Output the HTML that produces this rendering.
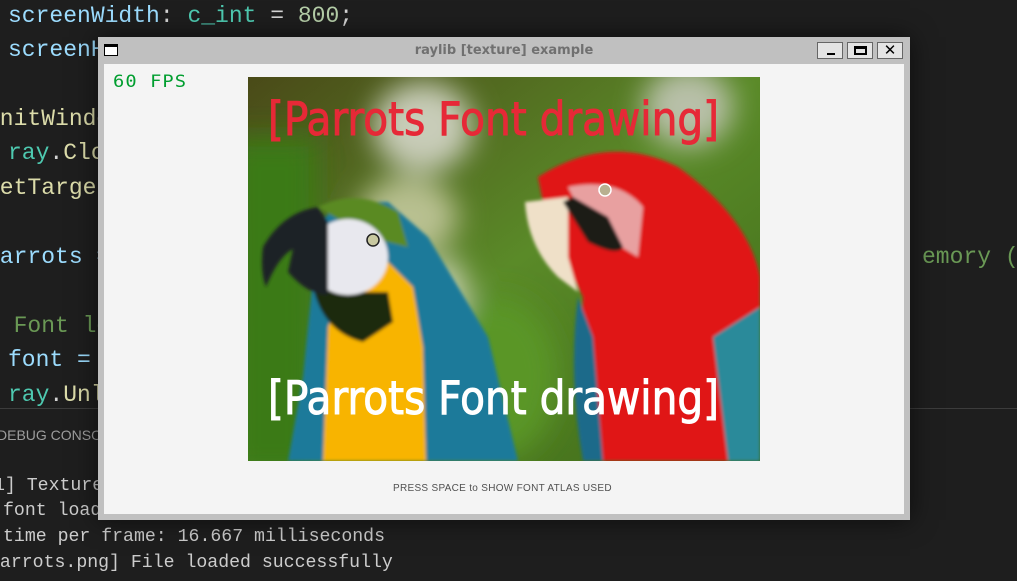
<!DOCTYPE html>
<html><head><style>
body{margin:0;width:1017px;height:581px;background:#1e1e1e;overflow:hidden;position:relative;font-family:"Liberation Mono",monospace}
.l{position:absolute;white-space:pre}
.b{color:#9cdcfe}.t{color:#4ec9b0}.n{color:#b5cea8}.y{color:#dcdcaa}.w{color:#d4d4d4}.g{color:#6a9955}
.term{position:absolute;font-size:18.2px;color:#cccccc;white-space:pre}
</style></head><body>
<div class="l" style="left:8px;top:0;font-size:23px;line-height:32px"><span class="b">screenWidth</span><span class="w">: </span><span class="t">c_int</span><span class="w"> = </span><span class="n">800</span><span class="w">;</span></div>
<div class="l b" style="left:8px;top:34px;font-size:23px;line-height:32px">screenHeight</div>
<div class="l y" style="left:-14px;top:103px;font-size:23px;line-height:32px">InitWindow</div>
<div class="l" style="left:8px;top:137px;font-size:23px;line-height:32px"><span class="t">ray</span><span class="w">.</span><span class="y">CloseWindow</span></div>
<div class="l y" style="left:-14px;top:172px;font-size:23px;line-height:32px">SetTargetFPS</div>
<div class="l b" style="left:-14px;top:241px;font-size:23px;line-height:32px">parrots =</div>
<div class="l g" style="left:922px;top:241px;font-size:23px;line-height:32px">emory (RA</div>
<div class="l g" style="left:-14px;top:310px;font-size:23px;line-height:32px">/ Font loading</div>
<div class="l b" style="left:8px;top:344px;font-size:23px;line-height:32px">font =</div>
<div class="l" style="left:8px;top:379px;font-size:23px;line-height:32px"><span class="t">ray</span><span class="w">.</span><span class="y">Unload</span></div>
<div style="position:absolute;left:0;top:408px;width:1017px;height:1px;background:#3c3c3c"></div>
<div class="l" style="left:-3px;top:427px;font-family:'Liberation Sans',sans-serif;font-size:14px;color:#9d9d9d">DEBUG CONSOLE</div>
<div class="term" style="left:-6px;top:476px">1] Texture</div>
<div class="term" style="left:3px;top:501px">font loaded</div>
<div class="term" style="left:3px;top:527px">time per frame: 16.667 milliseconds</div>
<div class="term" style="left:-11px;top:553px">parrots.png] File loaded successfully</div>
<!-- window -->
<div style="position:absolute;left:98px;top:37px;width:812px;height:483px;background:#c0c0c0;box-shadow:0 0 24px rgba(0,0,0,.6)"></div>
<div style="position:absolute;left:104px;top:64px;width:800px;height:450px;background:#f4f4f4"></div>
<div style="position:absolute;left:104px;top:44px;width:14px;height:12px;border:1px solid #000;background:#fff;box-sizing:border-box;border-top-width:3px"></div>
<div style="position:absolute;left:98px;width:812px;top:43px;text-align:center;font-family:'DejaVu Sans',sans-serif;font-weight:bold;font-size:13px;color:#707070">raylib [texture] example</div>
<div style="position:absolute;left:817px;top:42px;width:26px;height:17px;border:1px solid #666;box-sizing:border-box;background:#e4e4e4"><div style="position:absolute;left:9px;top:10px;width:8px;height:2px;background:#000"></div></div>
<div style="position:absolute;left:847px;top:42px;width:26px;height:17px;border:1px solid #666;box-sizing:border-box;background:#e4e4e4"><div style="position:absolute;left:6px;top:3px;width:13px;height:9px;border:2px solid #000;border-top-width:3px;box-sizing:border-box"></div></div>
<div style="position:absolute;left:877px;top:42px;width:26px;height:17px;border:1px solid #666;box-sizing:border-box;background:#e4e4e4;font:bold 15px 'DejaVu Sans',sans-serif;text-align:center;line-height:15px">✕</div>
<div style="position:absolute;left:113px;top:72px;font-family:'DejaVu Sans Mono',monospace;font-size:17px;color:#009e2f;letter-spacing:1px;transform:scaleX(1.1);transform-origin:left">60 FPS</div>
<svg style="position:absolute;left:248px;top:77px" width="512" height="384" viewBox="0 0 512 384">
<defs>
<filter id="bl"><feGaussianBlur stdDeviation="14"/></filter>
<filter id="bl2"><feGaussianBlur stdDeviation="1.5"/></filter>
<linearGradient id="bg" x1="0" y1="0" x2="1" y2="1"><stop offset="0" stop-color="#4a4a18"/><stop offset=".5" stop-color="#5a8a28"/><stop offset="1" stop-color="#3e6a18"/></linearGradient>
<clipPath id="c"><rect width="512" height="384"/></clipPath>
</defs>
<g clip-path="url(#c)">
<rect width="512" height="384" fill="url(#bg)"/>
<g filter="url(#bl)">
<ellipse cx="175" cy="50" rx="50" ry="45" fill="#c8ccb8"/>
<ellipse cx="440" cy="30" rx="45" ry="40" fill="#b8c0a8"/>
<ellipse cx="160" cy="140" rx="50" ry="40" fill="#b8c090"/>
<ellipse cx="195" cy="220" rx="25" ry="40" fill="#c8d0b0"/>
<rect x="-20" y="60" width="90" height="340" fill="#3a7a18"/>
<ellipse cx="250" cy="300" rx="60" ry="80" fill="#5a9628"/>
</g>
<g filter="url(#bl2)">
<path d="M55 300 L40 384 L270 384 L240 260 L180 160 L140 125 L90 125 L70 150 Z" fill="#1a7a9a"/>
<path d="M80 250 L75 384 L178 384 L175 270 L165 210 L140 185 L100 195 Z" fill="#f8b400"/>
<path d="M70 130 Q110 110 150 135 L160 170 L120 160 Z" fill="#5a8a20"/>
<path d="M65 210 Q75 255 115 265 L145 245 L140 215 L100 215 Z" fill="#1e2a10"/>
<ellipse cx="100" cy="180" rx="40" ry="38" fill="#e8e8ee"/>
<path d="M70 130 Q35 135 15 170 Q12 195 18 210 Q30 180 45 172 L40 195 Q60 218 80 218 L80 145 Z" fill="#1e2226"/>
<path d="M290 100 Q360 55 430 90 Q500 140 512 200 L512 384 L350 384 Q330 300 335 220 L300 150 Z" fill="#e01818"/>
<path d="M320 110 Q370 100 395 130 L390 180 L340 150 Z" fill="#e8a0a0"/>
<path d="M277 125 Q280 170 310 200 L330 215 L320 180 L320 120 Z" fill="#efe0c8"/>
<path d="M315 125 L340 165 Q370 180 375 170 L360 140 L325 120 Z" fill="#1e1e16"/>
<path d="M330 220 Q320 300 335 384 L355 384 L345 260 Z" fill="#1a6a8a"/>
<path d="M465 260 L512 230 L512 384 L480 384 Z" fill="#2a8a9a"/>
</g>
<circle cx="125" cy="163" r="6" fill="#c8c8a0" stroke="#222" stroke-width="1.5"/>
<circle cx="357" cy="113" r="6" fill="#b8b090" stroke="#fff" stroke-width="1.5"/>
<text x="20" y="58" textLength="451" lengthAdjust="spacingAndGlyphs" font-family="DejaVu Sans,sans-serif" font-size="46" fill="#e62937" stroke="#e62937" stroke-width="1">[Parrots Font drawing]</text>
<text x="20" y="337" textLength="451" lengthAdjust="spacingAndGlyphs" font-family="DejaVu Sans,sans-serif" font-size="46" fill="#ffffff" stroke="#fff" stroke-width="1">[Parrots Font drawing]</text>
</g>
</svg>
<div style="position:absolute;left:393px;top:483px;width:227px;font-family:'Liberation Sans',sans-serif;font-size:10px;color:#505050;white-space:nowrap;letter-spacing:.3px">PRESS SPACE to SHOW FONT ATLAS USED</div>
</body></html>
